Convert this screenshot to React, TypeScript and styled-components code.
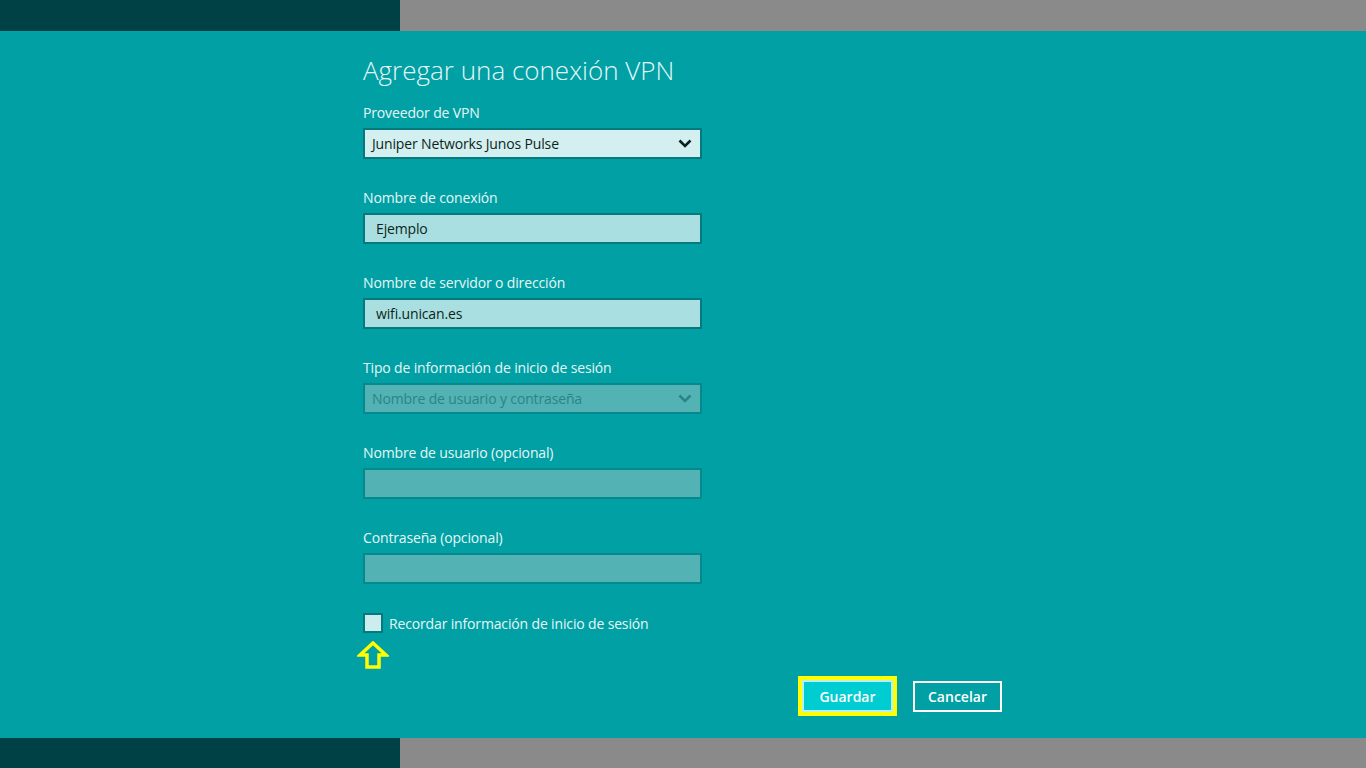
import React from "react";
import styled, { createGlobalStyle } from "styled-components";

const Global = createGlobalStyle`
  html, body { margin: 0; padding: 0; background: #00a0a4; }
  body { font-family: "Open Sans", "Noto Sans", sans-serif; }
  * { box-sizing: border-box; }
`;

const Page = styled.div`
  width: 1366px;
  height: 768px;
  display: flex;
  flex-direction: column;
  overflow: hidden;
`;

const Strip = styled.div<{ $h: number }>`
  height: ${(p) => p.$h}px;
  display: flex;
  flex: none;
`;

const StripDark = styled.div`
  width: 400px;
  background: #004146;
`;

const StripGrey = styled.div`
  flex: 1;
  background: #8a8a8a;
`;

const Panel = styled.main`
  flex: 1;
  background: #00a0a4;
  padding: 22px 0 0 363px;
  display: flex;
  flex-direction: column;
`;

const Title = styled.h1`
  margin: 0;
  font-family: "Open Sans", sans-serif;
  font-weight: 300;
  font-size: 26px;
  line-height: 34px;
  color: #e6f7f7;
`;

const Form = styled.div`
  width: 339px;
  display: flex;
  flex-direction: column;
  margin-top: 16px;
`;

const Field = styled.div`
  display: flex;
  flex-direction: column;
  gap: 5px;
  margin-bottom: 29px;
`;

const Label = styled.label`
  font-size: 14px;
  line-height: 20px;
  color: #e6f7f7;
  letter-spacing: -0.15px;
`;

type BoxKind = "select" | "text" | "disabled";

const Box = styled.div<{ $kind: BoxKind }>`
  height: 31px;
  display: flex;
  align-items: center;
  justify-content: space-between;
  padding: 0 8px 0 ${(p) => (p.$kind === "text" ? 11 : 7)}px;
  border: 2px solid ${(p) => (p.$kind === "disabled" ? "#05898d" : "#047a7e")};
  background: ${(p) =>
    p.$kind === "select" ? "#d3eff0" : p.$kind === "text" ? "#a9dfe1" : "#52b2b4"};
  color: ${(p) => (p.$kind === "disabled" ? "#2a8588" : "#0d1f20")};
  font-size: 14px;
  letter-spacing: -0.15px;
`;

const Chevron = ({ color }: { color: string }) => (
  <svg width="14" height="9" viewBox="0 0 14 9">
    <path d="M1.5 1.5 L7 7 L12.5 1.5" fill="none" stroke={color} strokeWidth="2.6" />
  </svg>
);

const CheckRow = styled.div`
  display: flex;
  align-items: center;
  gap: 6px;
  margin-top: 0px;
`;

const CheckBox = styled.span`
  width: 20px;
  height: 20px;
  border: 2px solid #047a7e;
  background: #cdeced;
  flex: none;
`;

const CheckText = styled.span`
  font-size: 14px;
  color: #e6f7f7;
  letter-spacing: -0.15px;
`;

const Arrow = styled.svg`
  margin: 8px 0 0 -6px;
  display: block;
`;

const Buttons = styled.div`
  width: 639px;
  display: flex;
  justify-content: flex-end;
  align-items: center;
  gap: 16px;
  margin-top: 7px;
`;

const Button = styled.button<{ $primary?: boolean }>`
  width: ${(p) => (p.$primary ? 91 : 89)}px;
  height: ${(p) => (p.$primary ? 32 : 31)}px;
  margin: ${(p) => (p.$primary ? "4px" : "0")};
  font-family: "Open Sans", sans-serif;
  font-weight: 600;
  font-size: 14px;
  color: #ffffff;
  padding: 0;
  background: ${(p) => (p.$primary ? "#00cdd1" : "transparent")};
  border: 2px solid ${(p) => (p.$primary ? "#b9f0f1" : "#ffffff")};
  outline: ${(p) => (p.$primary ? "4px solid #ffff00" : "none")};
  outline-offset: 0;
`;

export default function App() {
  return (
    <Page>
      <Global />
      <Strip $h={31}>
        <StripDark />
        <StripGrey />
      </Strip>
      <Panel>
        <Title>Agregar una conexión VPN</Title>
        <Form>
          <Field>
            <Label>Proveedor de VPN</Label>
            <Box $kind="select">
              Juniper Networks Junos Pulse
              <Chevron color="#0d1f20" />
            </Box>
          </Field>
          <Field>
            <Label>Nombre de conexión</Label>
            <Box $kind="text">Ejemplo</Box>
          </Field>
          <Field>
            <Label>Nombre de servidor o dirección</Label>
            <Box $kind="text">wifi.unican.es</Box>
          </Field>
          <Field>
            <Label>Tipo de información de inicio de sesión</Label>
            <Box $kind="disabled">
              Nombre de usuario y contraseña
              <Chevron color="#2a8588" />
            </Box>
          </Field>
          <Field>
            <Label>Nombre de usuario (opcional)</Label>
            <Box $kind="disabled" />
          </Field>
          <Field>
            <Label>Contraseña (opcional)</Label>
            <Box $kind="disabled" />
          </Field>
          <CheckRow>
            <CheckBox />
            <CheckText>Recordar información de inicio de sesión</CheckText>
          </CheckRow>
          <Arrow width="32" height="28" viewBox="0 0 32 28">
            <path
              d="M16 2 L29 14 L22 14 L22 26 L10 26 L10 14 L3 14 Z"
              fill="none"
              stroke="#ffff00"
              strokeWidth="3.5"
              strokeLinejoin="miter"
            />
          </Arrow>
        </Form>
        <Buttons>
          <Button $primary>Guardar</Button>
          <Button>Cancelar</Button>
        </Buttons>
      </Panel>
      <Strip $h={30}>
        <StripDark />
        <StripGrey />
      </Strip>
    </Page>
  );
}
